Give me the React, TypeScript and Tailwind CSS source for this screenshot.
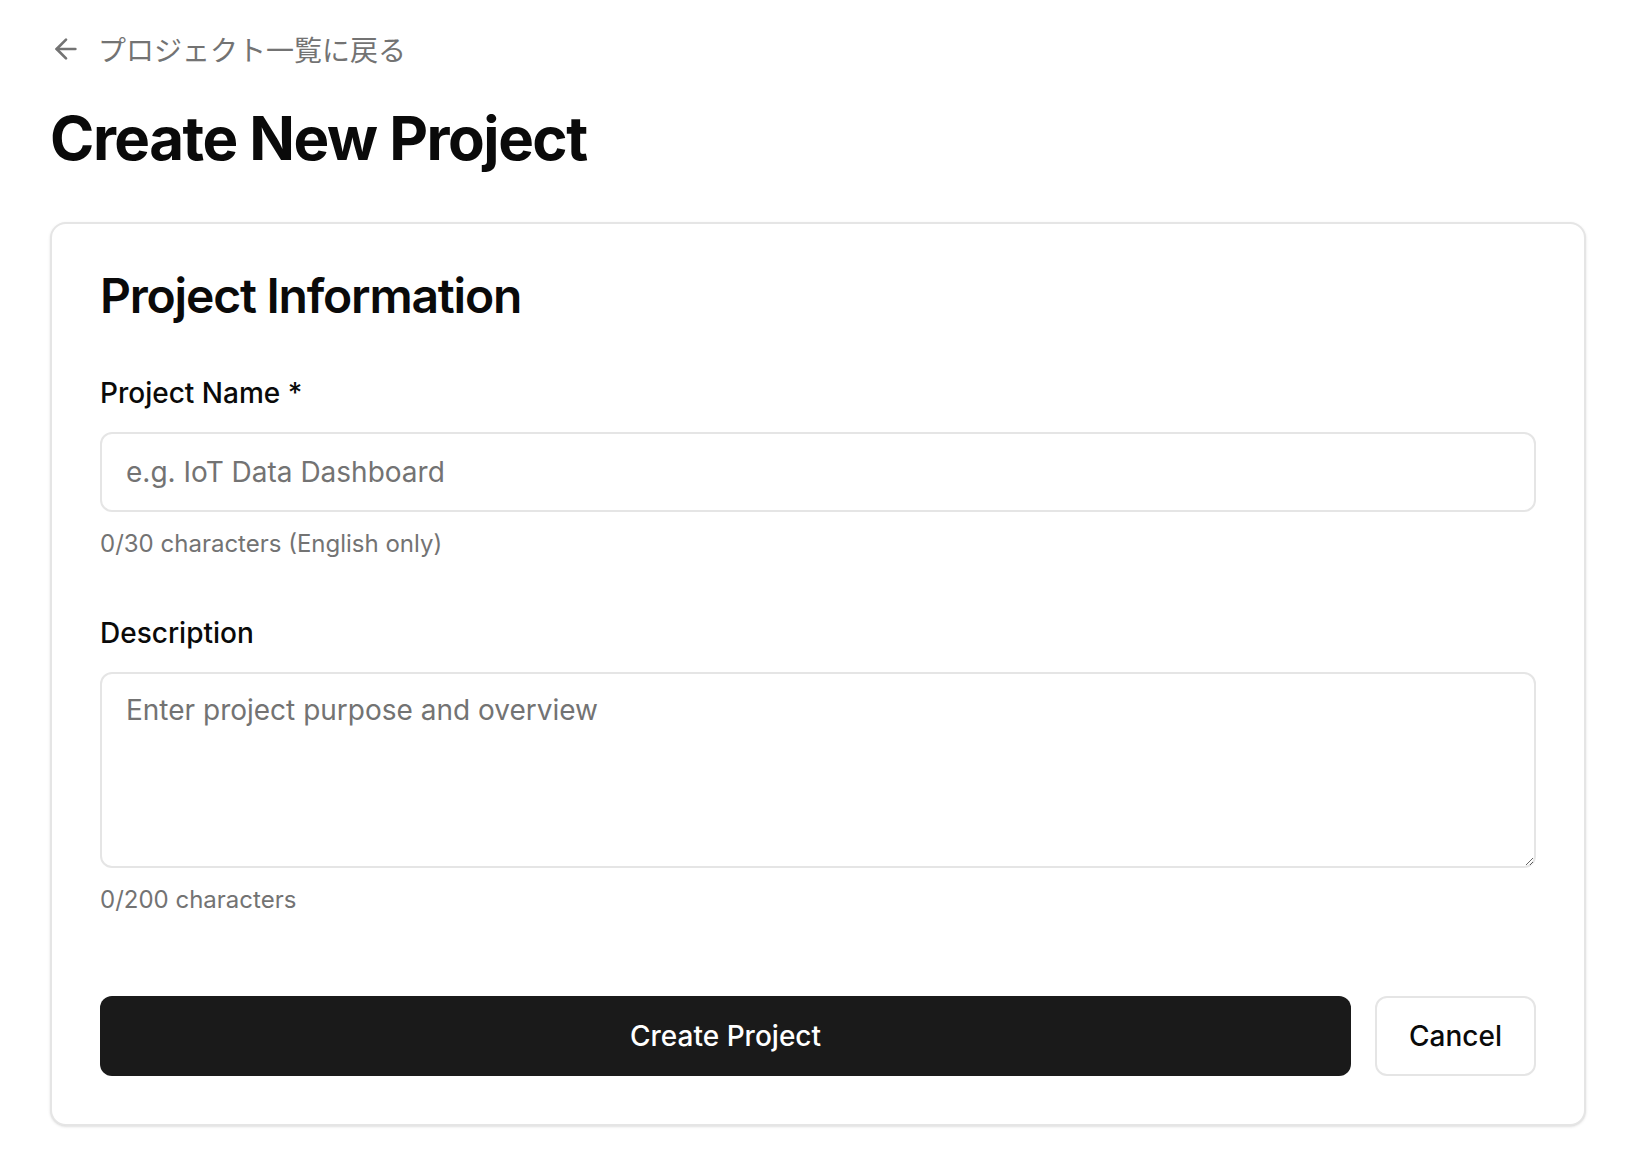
import { ArrowLeft } from 'lucide-react';

const font = "font-['Inter','Noto_Sans_CJK_JP',sans-serif]";

function Field({ label, children, hint }: { label: string; children: React.ReactNode; hint: string }) {
  return (
    <div className="flex flex-col">
      <label className="text-[28px] leading-[28px] font-medium text-[#0a0a0a]">{label}</label>
      <div className="mt-[25px]">{children}</div>
      <p className="mt-[16px] text-[24px] leading-[32px] text-[#737373]">{hint}</p>
    </div>
  );
}

export default function App() {
  return (
    <div className={`min-h-screen bg-white text-[#0a0a0a] ${font}`}>
      <div className="pl-[50px] pt-[29px] pb-[40px]">
        <div className="w-[1536px]">
          <a href="#" className="flex items-center gap-[16px] h-[40px] text-[28px] text-[#737373] font-['Noto_Sans_CJK_JP','Inter',sans-serif]">
            <ArrowLeft size={32} strokeWidth={2} />
            <span>プロジェクト一覧に戻る</span>
          </a>

          <h1 className="mt-[33px] text-[60px] leading-[72px] font-bold tracking-tight">Create New Project</h1>

          <div className="mt-[48px] rounded-[16px] border-2 border-[#e5e5e5] bg-white p-[48px] shadow-sm">
            <h2 className="text-[48px] leading-none font-semibold tracking-tight">Project Information</h2>

            <form className="mt-[59px] flex flex-col gap-[59px]" onSubmit={e => e.preventDefault()}>
              <Field label="Project Name *" hint="0/30 characters (English only)">
                <input
                  type="text"
                  placeholder="e.g. IoT Data Dashboard"
                  className="w-full h-[80px] rounded-[12px] border-2 border-[#e5e5e5] px-[24px] text-[28px] outline-none placeholder:text-[#737373]"
                />
              </Field>

              <Field label="Description" hint="0/200 characters">
                <textarea
                  rows={4}
                  placeholder="Enter project purpose and overview"
                  className="block w-full h-[196px] rounded-[12px] border-2 border-[#e5e5e5] px-[24px] py-[16px] text-[28px] leading-[40px] outline-none placeholder:text-[#737373]"
                />
              </Field>
            </form>

            <div className="mt-[80px] flex gap-[24px]">
              <button className="flex-1 h-[80px] rounded-[12px] bg-[#1a1a1a] text-white text-[28px] font-medium">
                Create Project
              </button>
              <button className="h-[80px] rounded-[12px] border-2 border-[#e5e5e5] bg-white px-[32px] text-[28px] font-medium">
                Cancel
              </button>
            </div>
          </div>
        </div>
      </div>
    </div>
  );
}
